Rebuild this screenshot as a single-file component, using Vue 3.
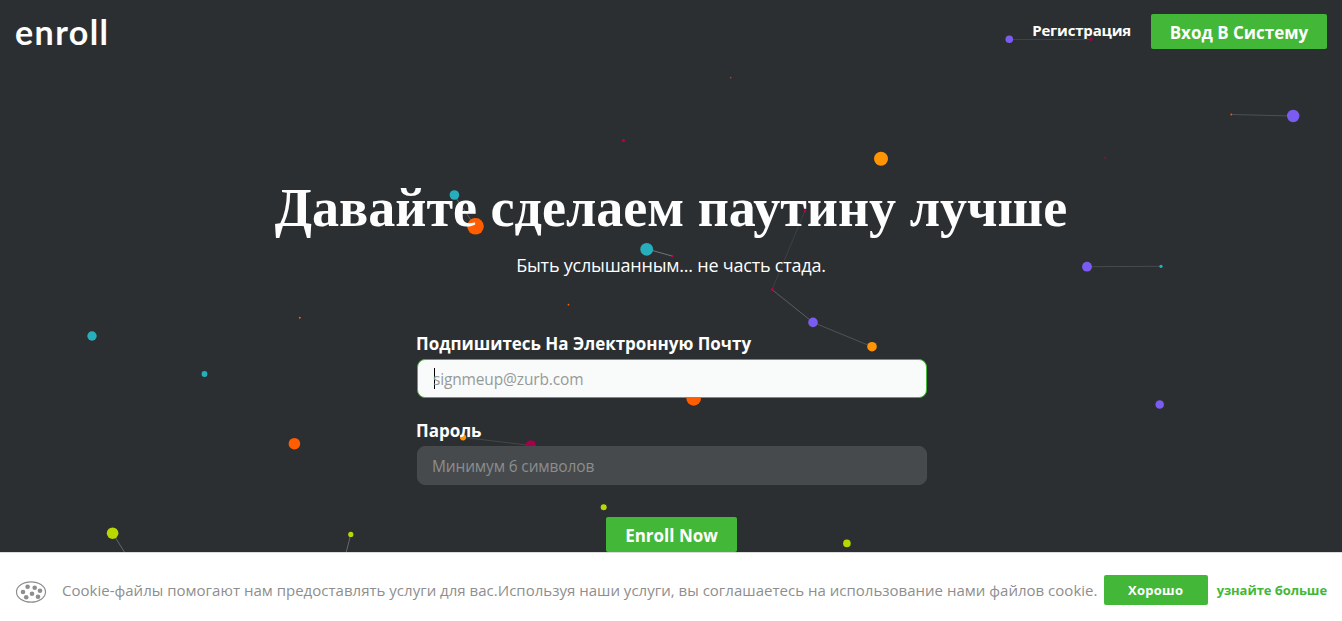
<template>
  <div class="page">
    <svg class="particles" viewBox="0 0 1342 552" aria-hidden="true">
      <line
        v-for="(line, i) in lines"
        :key="'line' + i"
        :x1="line[0]"
        :y1="line[1]"
        :x2="line[2]"
        :y2="line[3]"
        :stroke="line[4]"
      />
      <circle
        v-for="(dot, i) in dots"
        :key="'dot' + i"
        :cx="dot[0]"
        :cy="dot[1]"
        :r="dot[2]"
        :fill="dot[3]"
      />
    </svg>

    <header class="top-bar">
      <a class="logo">enroll</a>
      <nav class="top-nav">
        <a class="signup-link">Регистрация</a>
        <button class="button login-button">Вход В Систему</button>
      </nav>
    </header>

    <main class="hero">
      <h1 class="hero-title">Давайте сделаем паутину лучше</h1>
      <p class="hero-subtitle">Быть услышанным... не часть стада.</p>

      <form class="signup-form" @submit.prevent>
        <label class="field-label email-label" for="email">Подпишитесь На Электронную Почту</label>
        <div class="field field-active">
          <span class="caret"></span>
          <input id="email" v-model="email" type="email" placeholder="signmeup@zurb.com" />
        </div>
        <label class="field-label password-label" for="password">Пароль</label>
        <div class="field">
          <input id="password" v-model="password" type="password" placeholder="Минимум 6 символов" />
        </div>
        <button class="button enroll-button">Enroll Now</button>
      </form>
    </main>

    <footer class="cookie-bar">
      <svg class="cookie-icon" width="32" height="24" viewBox="0 0 32 24" aria-hidden="true">
        <ellipse cx="16" cy="12" rx="14.5" ry="10.2" fill="none" stroke="#8e8e8e" stroke-width="1.2" />
        <g fill="#8e8e8e">
          <circle cx="12.6" cy="6.8" r="2.3" />
          <circle cx="19.7" cy="7.8" r="2.3" />
          <circle cx="8" cy="12" r="2.3" />
          <circle cx="25" cy="10.8" r="2.3" />
          <circle cx="17" cy="13.7" r="2.3" />
          <circle cx="11.2" cy="17.2" r="2.3" />
          <circle cx="23" cy="16.7" r="2.3" />
        </g>
      </svg>
      <p class="cookie-text">Cookie-файлы помогают нам предоставлять услуги для вас.Используя наши услуги, вы соглашаетесь на использование нами файлов cookie.</p>
      <button class="ok-button">Хорошо</button>
      <a class="more-link">узнайте больше</a>
    </footer>
  </div>
</template>

<script setup>
import { ref } from 'vue'

const email = ref('')
const password = ref('')

// x, y, radius, colour
const dots = [
  [1009.3, 39.2, 3.8, '#7b5cf0'],
  [1091, 39.2, 1.7, '#a6004c'],
  [1293.2, 116, 6.2, '#7b5cf0'],
  [1231.3, 114.5, 0.9, '#ff5d00'],
  [730.7, 77.7, 0.8, '#d0402a'],
  [623.5, 140.5, 1.5, '#b8004f'],
  [1105, 158, 0.8, '#b8004f'],
  [881, 158.7, 7, '#ff9505'],
  [454.4, 195, 4.8, '#27aebd'],
  [475.5, 226.3, 8.3, '#ff5d00'],
  [646.7, 249.3, 6.4, '#27aebd'],
  [672.5, 256.3, 1, '#c80052'],
  [805, 211, 1.4, '#b8004f'],
  [772.3, 289.6, 1.5, '#b8004f'],
  [813, 322.4, 4.8, '#7b5cf0'],
  [872, 346.7, 4.8, '#ff9505'],
  [1087, 266.7, 4.9, '#7b5cf0'],
  [1161, 266.3, 1.6, '#27aebd'],
  [568.5, 304.7, 0.9, '#ff5d00'],
  [299.8, 317.7, 1, '#ff5d00'],
  [92, 336, 4.7, '#27aebd'],
  [204.5, 374, 2.9, '#27aebd'],
  [1159.7, 404.5, 4.3, '#7b5cf0'],
  [693.7, 398.4, 7.3, '#ff5d00'],
  [463, 437.3, 3.1, '#ff9505'],
  [530.7, 445.5, 5.2, '#a6004c'],
  [294.4, 443.7, 5.8, '#ff5d00'],
  [603.7, 507.3, 3, '#b8d800'],
  [112.6, 533.2, 5.8, '#b8d800'],
  [350.8, 534.4, 2.6, '#b8d800'],
  [846.9, 543.4, 3.8, '#b8d800']
]

// x1, y1, x2, y2, colour
const lines = [
  [1009, 39.5, 1091, 39.5, '#404346'],
  [1231, 114.5, 1293, 116, '#4d5053'],
  [454, 195, 475, 226, '#66696b'],
  [647, 249, 673, 256.3, '#737577'],
  [805, 211, 772, 289.6, '#3d4043'],
  [772, 289.6, 813, 322.4, '#5c5f61'],
  [813, 322.4, 872, 346.7, '#505355'],
  [1087, 266.7, 1161, 266.3, '#484b4e'],
  [463, 437.3, 531, 445.5, '#44474a'],
  [112.6, 533.2, 125, 553, '#66696b'],
  [350.8, 534.4, 346, 553, '#66696b']
]
</script>

<style>
body {
  margin: 0;
  overflow: hidden;
}
</style>

<style scoped>
.page {
  position: relative;
  display: flex;
  flex-direction: column;
  height: 621px;
  overflow: hidden;
  background: #2c2f31;
  color: #fefefe;
  font-family: "Open Sans", "Noto Sans", sans-serif;
}

.particles {
  position: absolute;
  top: 0;
  left: 0;
  width: 1342px;
  height: 552px;
}

.top-bar {
  position: relative;
  display: flex;
  align-items: flex-start;
  justify-content: space-between;
  height: 64px;
  padding: 0 15px;
}

.logo {
  margin-top: 11px;
  font-family: Lato, sans-serif;
  font-size: 34px;
  font-weight: 700;
  line-height: 41px;
  letter-spacing: 1.4px;
}

.top-nav {
  display: flex;
  gap: 20px;
  padding-top: 14px;
}

.signup-link {
  font-size: 15px;
  font-weight: 700;
  line-height: 33px;
  letter-spacing: -0.18px;
  white-space: nowrap;
}

.button {
  height: 35px;
  padding: 0;
  border: none;
  border-radius: 2px;
  background: #43b737;
  color: #fefefe;
  font-family: inherit;
  font-size: 17px;
  font-weight: 700;
  line-height: 37px;
  white-space: nowrap;
}

.login-button {
  width: 176px;
}

.hero {
  position: relative;
  display: flex;
  flex: none;
  flex-direction: column;
  align-items: center;
  height: 488px;
}

.hero-title {
  margin: 112px 0 0;
  font-family: "Liberation Serif", serif;
  font-size: 54.1px;
  font-weight: 700;
  line-height: 64px;
  white-space: nowrap;
}

.hero-subtitle {
  margin: 12px 0 0;
  font-size: 18px;
  line-height: 27px;
  letter-spacing: -0.21px;
  white-space: nowrap;
}

.signup-form {
  display: flex;
  flex-direction: column;
  width: 510px;
  margin: 51px 0 0 2px;
}

.field-label {
  height: 29px;
  margin-left: -1px;
  font-size: 17px;
  font-weight: 700;
  line-height: 27px;
  letter-spacing: -0.02px;
  white-space: nowrap;
}

.password-label {
  margin-top: 19px;
}

.field {
  display: flex;
  align-items: center;
  box-sizing: border-box;
  height: 39px;
  padding: 0 14px;
  border: 1px solid #484b4d;
  border-radius: 8px;
  background: #474a4c;
}

.field-active {
  border-color: #43b737;
  background: #f9fbfa;
}

.field input {
  width: 100%;
  padding: 1px 0 0;
  border: none;
  outline: none;
  background: none;
  font-family: inherit;
  font-size: 15.5px;
  letter-spacing: -0.15px;
}

.field input::placeholder {
  color: #8b8d8e;
  opacity: 1;
}

.field-active input::placeholder {
  color: #979999;
}

.caret {
  flex: none;
  width: 1px;
  height: 21px;
  margin: 0 -2px 0 2px;
  background: #000;
}

.enroll-button {
  align-self: center;
  width: 131px;
  margin: 32px 1px 0 0;
}

.cookie-bar {
  position: relative;
  display: flex;
  flex: 1;
  align-items: center;
  box-sizing: border-box;
  padding: 5px 15px 0;
  border-top: 1px solid #dcdcdc;
  background: #fff;
}

.cookie-icon {
  flex: none;
  margin-top: 4px;
}

.cookie-text {
  width: 1042px;
  margin: 0 0 0 15px;
  color: #8e8e8e;
  font-size: 15px;
  line-height: 24px;
  letter-spacing: 0.015px;
  white-space: nowrap;
}

.ok-button {
  flex: none;
  width: 104px;
  height: 30px;
  padding: 0;
  border: none;
  border-radius: 2px;
  background: #43b737;
  color: #fff;
  font-family: inherit;
  font-size: 13px;
  font-weight: 700;
  letter-spacing: 0.3px;
}

.more-link {
  margin-left: 9px;
  color: #43b737;
  font-size: 13px;
  font-weight: 700;
  letter-spacing: -0.08px;
  white-space: nowrap;
}
</style>
